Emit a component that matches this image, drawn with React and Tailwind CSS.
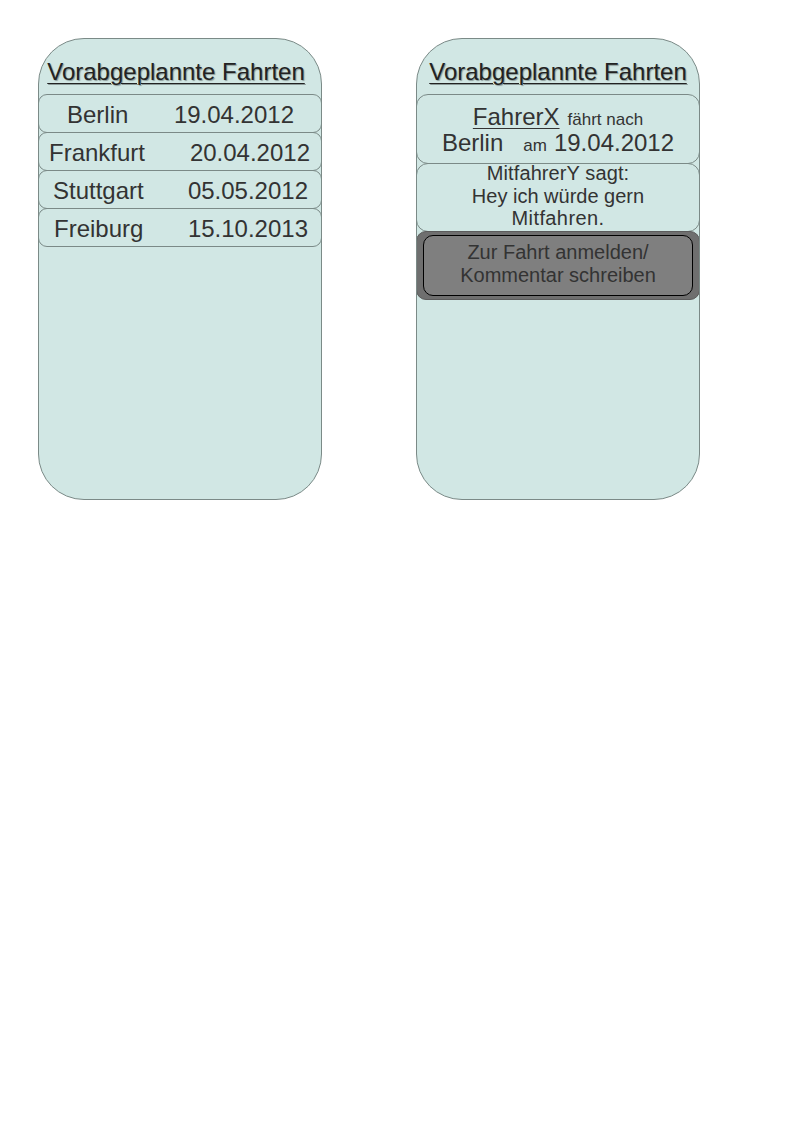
export default function App() {
  const rows = [
    { city: "Berlin", date: "19.04.2012", pad: "pl-[28px] pr-[27px]" },
    { city: "Frankfurt", date: "20.04.2012", pad: "pl-[10px] pr-[11px]" },
    { city: "Stuttgart", date: "05.05.2012", pad: "pl-[14px] pr-[13px]" },
    { city: "Freiburg", date: "15.10.2013", pad: "pl-[15px] pr-[13px]" },
  ];
  const font = { fontFamily: '"Liberation Sans", Arial, sans-serif' };
  const title = (extra) => (
    <div className={`h-[56px] flex items-end justify-center pb-[10px] ${extra}`}>
      <span className="text-[24px] leading-[26px] text-[#222] underline decoration-1 underline-offset-[3px] [text-shadow:1px_1px_1px_#8a9a98]">
        Vorabgeplannte Fahrten
      </span>
    </div>
  );
  return (
    <div className="w-[794px] h-[1123px] bg-white relative" style={font}>
      <div className="flex pt-[38px] pl-[38px] gap-[94px]">
        {/* Left panel */}
        <div className="w-[284px] h-[462px] rounded-[46px] bg-[#d1e7e4] border border-[#7b8a87] overflow-hidden">
          {title("pr-[8px]")}
          <div className="flex flex-col -mx-px -mt-px">
            {rows.map((r, i) => (
              <div
                key={i}
                className={`h-[39px] ${i > 0 ? "-mt-px" : ""} rounded-[9px] border border-[#7b8a87] flex items-center justify-between text-[24px] text-[#333] pt-[2px] ${r.pad}`}
              >
                <span>{r.city}</span>
                <span>{r.date}</span>
              </div>
            ))}
          </div>
        </div>

        {/* Right panel */}
        <div className="w-[284px] h-[462px] rounded-[46px] bg-[#d1e7e4] border border-[#7b8a87] overflow-hidden">
          {title("")}
          <div className="flex flex-col -mx-px -mt-px">
            <div className="h-[70px] rounded-[12px] border border-[#7b8a87] flex flex-col items-center justify-center text-[#333] pt-[1px]">
              <div className="h-[26px] leading-[26px] flex items-baseline">
                <span className="text-[24px] leading-[26px] underline decoration-1 underline-offset-[3px]">FahrerX</span>
                <span className="text-[17px] leading-[26px] ml-[8px]">fährt nach</span>
              </div>
              <div className="h-[26px] leading-[26px] flex items-baseline">
                <span className="text-[24px] leading-[26px]">Berlin</span>
                <span className="text-[17px] leading-[26px] ml-[20px] mr-[7px]">am</span>
                <span className="text-[24px] leading-[26px]">19.04.2012</span>
              </div>
            </div>
            <div className="h-[69px] -mt-px rounded-[12px] border border-[#7b8a87] flex flex-col items-center justify-center text-[#333] text-[20px] leading-[22.5px] text-center pb-[3px]">
              <span className="tracking-[0.1px]">MitfahrerY sagt:</span>
              <span>Hey ich würde gern</span>
              <span className="tracking-[0.4px]">Mitfahren.</span>
            </div>
            <div className="h-[69px] -mt-px rounded-[10px] border border-[#5c5c5c] bg-[#6f6f6f] px-[6px] py-[3px]">
              <div className="h-full rounded-[10px] border border-black bg-[#7f7f7f] flex flex-col items-center justify-center text-[20px] leading-[23px] text-[#333] text-center pb-[3px]">
                <span>Zur Fahrt anmelden/</span>
                <span>Kommentar schreiben</span>
              </div>
            </div>
          </div>
        </div>
      </div>
    </div>
  );
}
